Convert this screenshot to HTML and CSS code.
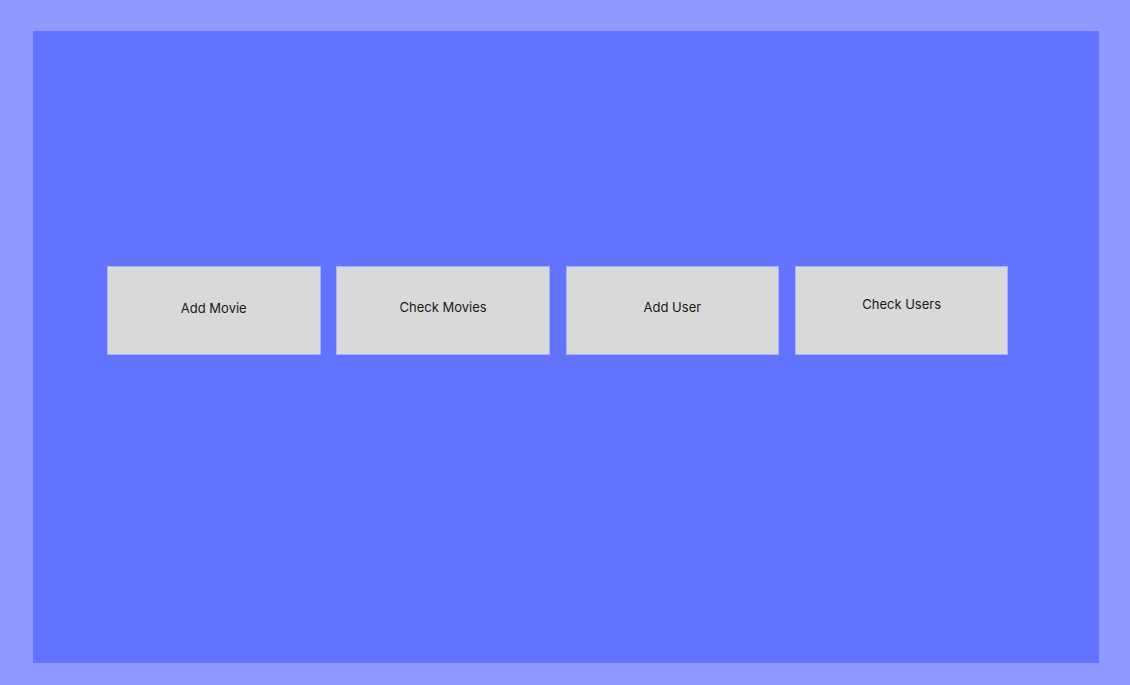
FILE: index.html
```html
<!DOCTYPE html>
<html>
<head>
<meta charset="utf-8">
<link rel="stylesheet" href="styles.css">
</head>
<body>
<main class="panel">
  <div class="actions">
    <button class="action action--low">Add Movie</button>
    <button class="action">Check Movies</button>
    <button class="action">Add User</button>
    <button class="action action--high">Check Users</button>
  </div>
</main>
</body>
</html>
```
FILE: styles.css
```css
html, body {
  margin: 0;
  height: 100%;
}
body {
  background: #8f9aff;
  padding: 31px 31px 22px 33px;
  box-sizing: border-box;
  font-family: Inter, "Liberation Sans", sans-serif;
}
.panel {
  height: 632px;
  background: #6173ff;
  box-sizing: border-box;
  padding: 235px 0 0 74px;
}
.actions {
  display: flex;
  gap: 15.8px;
}
.action {
  width: 213.5px;
  height: 89px;
  flex-shrink: 0;
  box-sizing: border-box;
  background: #d9d9d9;
  border: 1px solid #a9b0ff;
  font-family: inherit;
  font-size: 13px;
  color: #1a1a1a;
  display: flex;
  align-items: center;
  justify-content: center;
  padding: 0 0 7px;
  margin: 0;
}
.action--low {
  padding-bottom: 5px;
}
.action--high {
  padding-bottom: 13px;
}
```
